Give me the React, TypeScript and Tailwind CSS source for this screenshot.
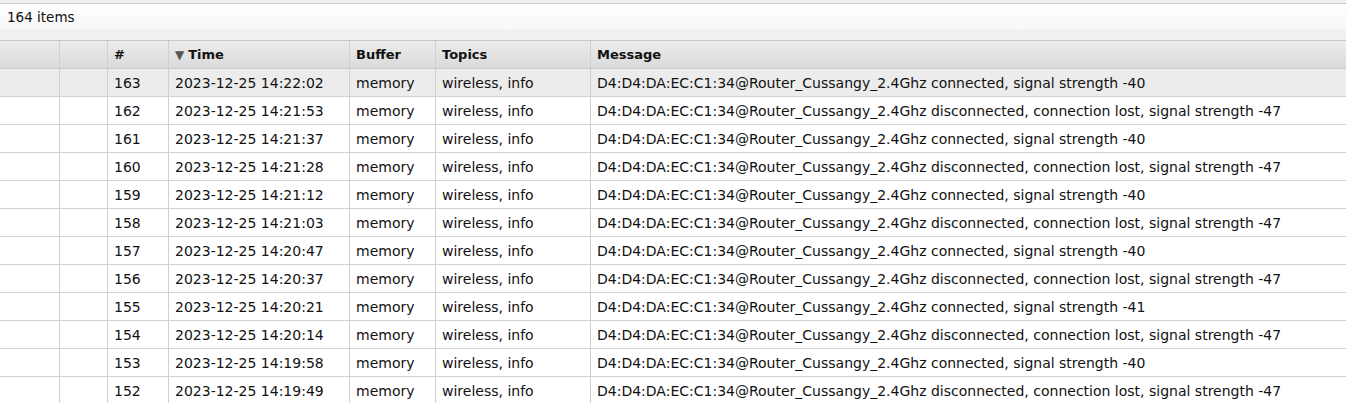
const rows: [number, string, string][] = [
  [163, "14:22:02", "connected, signal strength -40"],
  [162, "14:21:53", "disconnected, connection lost, signal strength -47"],
  [161, "14:21:37", "connected, signal strength -40"],
  [160, "14:21:28", "disconnected, connection lost, signal strength -47"],
  [159, "14:21:12", "connected, signal strength -40"],
  [158, "14:21:03", "disconnected, connection lost, signal strength -47"],
  [157, "14:20:47", "connected, signal strength -40"],
  [156, "14:20:37", "disconnected, connection lost, signal strength -47"],
  [155, "14:20:21", "connected, signal strength -41"],
  [154, "14:20:14", "disconnected, connection lost, signal strength -47"],
  [153, "14:19:58", "connected, signal strength -40"],
  [152, "14:19:49", "disconnected, connection lost, signal strength -47"],
];

const cols = "grid grid-cols-[60px_48px_61px_181px_86px_155px_1fr]";
const cell = "border-r border-[#d0d0d0] px-[6px] pt-px flex items-center whitespace-nowrap overflow-hidden";

export default function App() {
  return (
    <div
      className="w-[1346px] h-[403px] overflow-hidden bg-white text-[14px] text-[#111]"
      style={{ fontFamily: '"DejaVu Sans", Verdana, sans-serif' }}
    >
      <div className="h-[3px] bg-[#f0f0f0]" />
      <div className="h-[27px] border-t border-[#c8c8c8] bg-gradient-to-b from-white to-[#f7f7f7] flex items-center px-[7px] pt-px text-[13.5px]">
        164 items
      </div>
      <div className="h-[10px] bg-[#f0f0f0]" />
      <div className={`${cols} h-[29px] border-y border-[#c8c8c8] bg-gradient-to-b from-[#ececec] to-[#dadada] font-bold text-[13px]`}>
        <div className={cell} />
        <div className={cell} />
        <div className={cell}>#</div>
        <div className={cell}>
          <span className="text-[#555] text-[12px] mr-[4px]">▼</span>Time
        </div>
        <div className={cell}>Buffer</div>
        <div className={cell}>Topics</div>
        <div className={`${cell} border-r-0`}>Message</div>
      </div>
      {rows.map(([n, t, m], i) => (
        <div
          key={n}
          className={`${cols} h-[28px] border-b border-[#d0d0d0] ${i === 0 ? "bg-[#ececec]" : "bg-white"}`}
        >
          <div className={cell} />
          <div className={cell} />
          <div className={cell}>{n}</div>
          <div className={cell}>2023-12-25 {t}</div>
          <div className={cell}>memory</div>
          <div className={cell}>wireless, info</div>
          <div className={`${cell} border-r-0`}>D4:D4:DA:EC:C1:34@Router_Cussangy_2.4Ghz {m}</div>
        </div>
      ))}
    </div>
  );
}
